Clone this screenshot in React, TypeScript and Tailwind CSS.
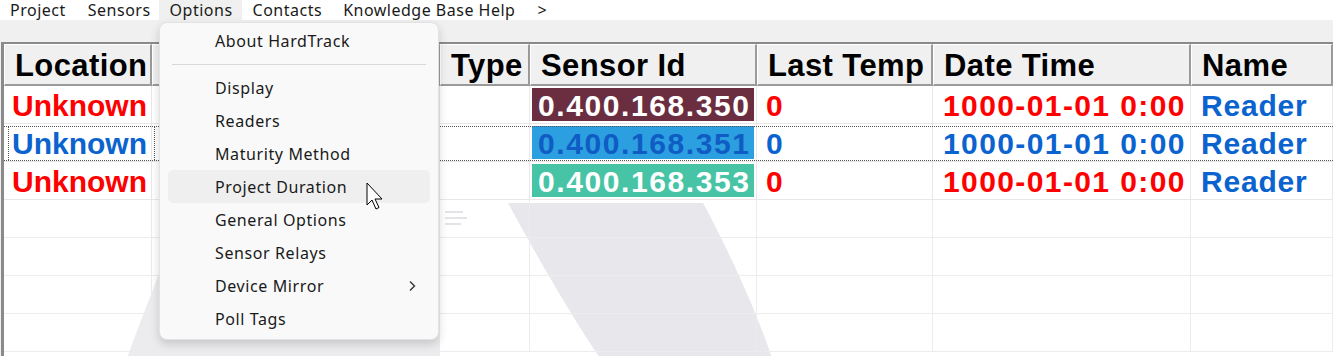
import React from "react";

const RED = "text-[#ff0000]";
const BLUE = "text-[#0b63cf]";

const cols = "grid grid-cols-[148px_288px_90px_227px_176px_258px_1fr]";

function HeaderCell({ children }: { children?: React.ReactNode }) {
  return (
    <div className="h-[42px] flex items-center pl-[10px] pt-[1px] bg-[#f0f0f0] border-t border-l border-t-white border-l-white border-r-2 border-b-2 border-r-[#9a9a9a] border-b-[#9a9a9a] whitespace-nowrap overflow-hidden">
      {children}
    </div>
  );
}

type Row = {
  loc: string;
  locColor: string;
  sid: string;
  sidBg: string;
  sidText: string;
  temp: string;
  tempColor: string;
  dt: string;
  dtColor: string;
  focus?: boolean;
};

const rows: Row[] = [
  { loc: "Unknown", locColor: RED, sid: "0.400.168.350", sidBg: "bg-[#6a2e40]", sidText: "text-white", temp: "0", tempColor: RED, dt: "1000-01-01 0:00", dtColor: RED },
  { loc: "Unknown", locColor: BLUE, sid: "0.400.168.351", sidBg: "bg-[#2c9fe0]", sidText: "text-[#0f5cc4]", temp: "0", tempColor: BLUE, dt: "1000-01-01 0:00", dtColor: BLUE, focus: true },
  { loc: "Unknown", locColor: RED, sid: "0.400.168.353", sidBg: "bg-[#47c4a6]", sidText: "text-white", temp: "0", tempColor: RED, dt: "1000-01-01 0:00", dtColor: RED },
];

const cellLine = "border-r border-b border-[#e8e8e8]";

function DataRow({ r }: { r: Row }) {
  return (
    <div className={`${cols} h-[38px] bg-white relative`}>
      {r.focus && (
        <div className="absolute left-0 right-0 top-[2px] bottom-[1px] border-y border-dotted border-[#555] pointer-events-none z-20" />
      )}
      <div className={`${cellLine} flex items-center pl-[8px] pt-[3px] ${r.locColor} relative`}>
        {r.focus && <div className="absolute left-[4px] right-[-4px] top-[2px] bottom-[1px] border-x border-dotted border-[#555]" />}
        {r.loc}
      </div>
      <div className={cellLine} />
      <div className={cellLine} />
      <div className={`${cellLine} p-[2px]`}>
        <div className={`${r.sidBg} ${r.sidText} h-full flex items-center pl-[6px] pt-[3px] tracking-[1.6px]`}>{r.sid}</div>
      </div>
      <div className={`${cellLine} flex items-center pl-[9px] pt-[3px] ${r.tempColor}`}>{r.temp}</div>
      <div className={`${cellLine} flex items-center pl-[10px] pt-[3px] ${r.dtColor} tracking-[1.4px]`}>{r.dt}</div>
      <div className={`${cellLine} flex items-center pl-[10px] pt-[3px] ${BLUE} tracking-[0.8px]`}>Reader</div>
    </div>
  );
}

function EmptyRow() {
  return (
    <div className={`${cols} h-[38px] relative`}>
      {Array.from({ length: 7 }).map((_, i) => (
        <div key={i} className="border-r border-b border-[#ececec]" />
      ))}
    </div>
  );
}

const menuItems = [
  "Display",
  "Readers",
  "Maturity Method",
  "Project Duration",
  "General Options",
  "Sensor Relays",
  "Device Mirror",
  "Poll Tags",
];

export default function App() {
  return (
    <div className="w-[1333px] h-[356px] overflow-hidden relative bg-[#f0f0f0] font-['Liberation_Sans',Arial,sans-serif]">
      {/* Menubar */}
      <div className="h-[20px] bg-white flex items-stretch text-[16px] tracking-[0.5px] text-[#1a1a1a] font-['Noto_Sans',sans-serif] leading-none">
        <div className="pl-[10px] pr-[11px] flex items-center">Project</div>
        <div className="pl-[11px] pr-[8px] flex items-center">Sensors</div>
        <div className="pl-[11px] pr-[9px] flex items-center bg-[#f0f0f0]">Options</div>
        <div className="pl-[11px] pr-[10px] flex items-center">Contacts</div>
        <div className="px-[11px] flex items-center">Knowledge Base Help</div>
        <div className="px-[11px] flex items-center">&gt;</div>
      </div>
      {/* gray strip */}
      <div className="h-[22px]" />
      {/* Grid */}
      <div className="relative h-[314px] bg-white border-l-[3px] border-t-2 border-[#8a8a8a] ml-[1px] font-bold leading-none">
        {/* watermark */}
        <svg className="absolute left-[-4px] top-[-42px] pointer-events-none" width="1333" height="356" viewBox="0 0 1333 356">
          <path d="M508 201 C 540 260, 575 320, 600 356 L 772 356 C 760 320, 735 260, 703 201 Z" fill="#e7e7ec" />
          <path d="M175 230 C 160 270, 140 320, 127 356 L 440 356 L 440 230 Z" fill="#ececef" />
          <path d="M445 210 h18 M445 216 h22 M445 222 h16" stroke="#e4e4e8" strokeWidth="2" />
        </svg>
        <div className="relative">
          <div className={`${cols} text-black text-[31px] tracking-[0.4px]`}>
            <HeaderCell>Location</HeaderCell>
            <HeaderCell />
            <HeaderCell>Type</HeaderCell>
            <HeaderCell>Sensor Id</HeaderCell>
            <HeaderCell>Last Temp</HeaderCell>
            <HeaderCell>Date Time</HeaderCell>
            <HeaderCell>Name</HeaderCell>
          </div>
          <div className="text-[30px]">
            {rows.map((r, i) => (
              <DataRow key={i} r={r} />
            ))}
            <EmptyRow />
            <EmptyRow />
            <EmptyRow />
            <EmptyRow />
          </div>
        </div>
      </div>

      {/* Dropdown menu */}
      <div className="absolute left-[159px] top-[22px] w-[280px] h-[318px] bg-[#f9f9f9] rounded-[8px] border border-[#e3e3e3] shadow-[0_4px_10px_rgba(0,0,0,0.16)] pt-[1px] font-['Noto_Sans',sans-serif] text-[16px] tracking-[0.6px] text-[#1a1a1a] z-30">
        <div className="h-[33px] mx-[8px] flex items-center pl-[47px]">About HardTrack</div>
        <div className="h-[14px] flex items-center px-[12px]">
          <div className="h-px w-full bg-[#d8d8d8]" />
        </div>
        {menuItems.map((m) => (
          <div
            key={m}
            className={`h-[33px] mx-[8px] flex items-center pl-[47px] pr-[13px] rounded-[5px] ${m === "Project Duration" ? "bg-[#efefef]" : ""}`}
          >
            <span className="flex-1">{m}</span>
            {m === "Device Mirror" && (
              <svg width="10" height="12" viewBox="0 0 10 12">
                <path d="M3 1.5 L7.5 6 L3 10.5" fill="none" stroke="#333" strokeWidth="1.4" />
              </svg>
            )}
          </div>
        ))}
      </div>

      {/* Cursor */}
      <svg className="absolute left-[366px] top-[182px] z-40" width="20" height="30" viewBox="0 0 20 30">
        <path d="M1 1 L1 23 L6 18 L10 27 L13 25.5 L9 17 L16 17 Z" fill="#fff" stroke="#000" strokeWidth="1" strokeLinejoin="round" />
      </svg>
    </div>
  );
}
